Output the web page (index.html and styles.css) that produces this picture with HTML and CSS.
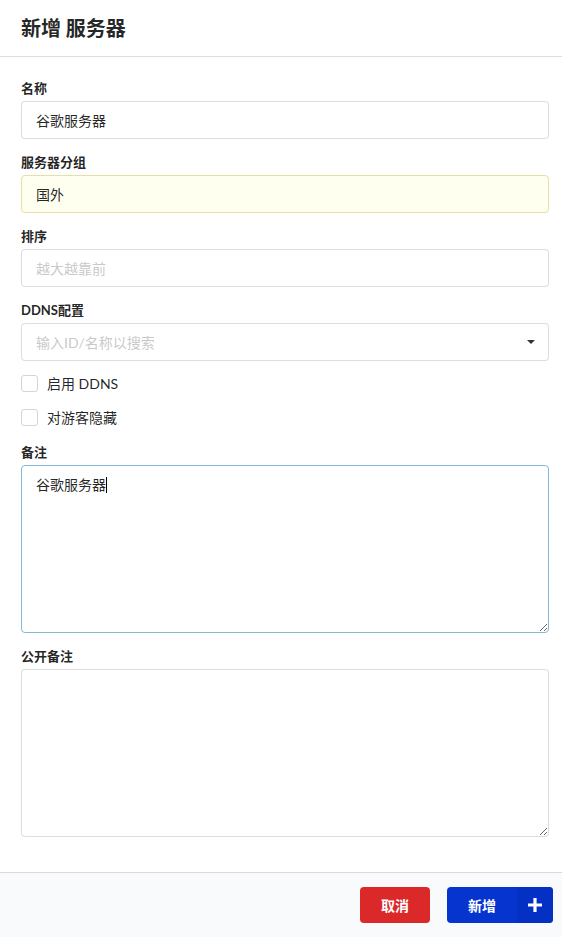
FILE: index.html
```html
<!DOCTYPE html>
<html>
	<head>
		<meta charset="UTF-8">
		<title>新增 服务器</title>
		<link rel="stylesheet" href="styles.css">
	</head>
	<body>
		<div class="modal">
			<div class="header">新增 服务器</div>
			<div class="content">
				<form class="form">
					<div class="field">
						<label>名称</label>
						<input type="text" value="谷歌服务器">
					</div>
					<div class="field">
						<label>服务器分组</label>
						<input type="text" class="filled" value="国外">
					</div>
					<div class="field">
						<label>排序</label>
						<input type="text" placeholder="越大越靠前">
					</div>
					<div class="field">
						<label>DDNS配置</label>
						<div class="dropdown">
							<span class="text">输入ID/名称以搜索</span>
							<span class="caret"></span>
						</div>
					</div>
					<div class="field check">
						<span class="box"></span>
						<span class="check-text">启用 DDNS</span>
					</div>
					<div class="field check">
						<span class="box"></span>
						<span class="check-text">对游客隐藏</span>
					</div>
					<div class="field">
						<label>备注</label>
						<div class="area-wrap">
							<textarea class="focus">谷歌服务器</textarea>
							<!-- 光标 -->
							<div class="cursor-layer"><span class="ghost">谷歌服务器</span><span class="cursor"></span></div>
						</div>
					</div>
					<div class="field">
						<label>公开备注</label>
						<textarea></textarea>
					</div>
				</form>
			</div>
			<div class="actions">
				<button class="btn red">取消</button>
				<button class="btn blue labeled">新增<span class="icon">
					<svg width="14" height="14" viewBox="0 0 14 14"><path d="M5.4 0h3.2v5.4H14v3.2H8.6V14H5.4V8.6H0V5.4h5.4z" fill="#fff"/></svg>
				</span></button>
			</div>
		</div>
	</body>
</html>
```

FILE: styles.css
```css
*{
	margin: 0px;
	padding: 0px;
	box-sizing: border-box;
}
html,body{
	background: #fff;
}
body{
	font-family: Lato, "Noto Sans CJK SC", sans-serif;
	font-size: 14px;
	line-height: 1.4285em;
	color: rgba(0,0,0,0.87);
}
.modal{
	width: 562px;
	min-height: 937px;
	display: flex;
	flex-direction: column;
}
.header{
	font-size: 20px;
	font-weight: bold;
	line-height: 25px;
	padding: 16px 21px 15px;
	border-bottom: 1px solid rgba(34,36,38,0.15);
}
.content{
	padding: 22px 13px 20px 21px;
	flex: 1;
}
.field{
	margin-bottom: 14px;
}
.field:last-child{
	margin-bottom: 0px;
}
.field label{
	display: block;
	font-size: 13px;
	font-weight: bold;
	line-height: 18px;
	margin-bottom: 4px;
}
.field input,.field textarea,.dropdown{
	display: block;
	width: 100%;
	font-family: Lato, "Noto Sans CJK SC", sans-serif;
	font-size: 14px;
	line-height: 17px;
	padding: 9.5px 14px;
	border: 1px solid rgba(34,36,38,0.15);
	border-radius: 4px;
	color: rgba(0,0,0,0.87);
	background: #fff;
	outline: none;
}
.field input::placeholder{
	color: rgba(191,191,191,0.87);
}
.field input.filled{
	background: #fffff0;
	border-color: #e5e0a3;
}
.dropdown{
	display: flex;
	align-items: center;
	justify-content: space-between;
}
.dropdown .text{
	color: rgba(191,191,191,0.87);
}
.dropdown .caret{
	width: 0px;
	height: 0px;
	border-left: 4px solid transparent;
	border-right: 4px solid transparent;
	border-top: 4px solid rgba(0,0,0,0.8);
	margin-right: -1px;
}
.field textarea{
	height: 168px;
	resize: vertical;
	line-height: 19px;
	padding: 9px 14px;
}
.field textarea.focus{
	border-color: #85b7d9;
}
.area-wrap{
	position: relative;
}
.cursor-layer{
	position: absolute;
	left: 1px;
	top: 1px;
	padding: 9px 14px;
	font-size: 14px;
	line-height: 19px;
	pointer-events: none;
	display: flex;
	align-items: center;
}
.cursor-layer .ghost{
	color: transparent;
}
.cursor-layer .cursor{
	width: 1px;
	height: 16px;
	background: #000;
}
.check{
	display: flex;
	align-items: flex-start;
	height: 20px;
}
.check .box{
	width: 17px;
	height: 17px;
	border: 1px solid #d4d4d5;
	border-radius: 3px;
	background: #fff;
}
.check-text{
	margin-left: 9px;
	font-size: 14px;
	line-height: 17px;
}
.actions{
	background: #f9fafb;
	border-top: 1px solid rgba(34,36,38,0.15);
	padding: 14px 9px 14px 14px;
	display: flex;
	justify-content: flex-end;
	gap: 17px;
}
.btn{
	height: 36px;
	border: none;
	border-radius: 4px;
	font-family: Lato, "Noto Sans CJK SC", sans-serif;
	font-size: 14px;
	font-weight: bold;
	color: #fff;
	padding: 0px 21px;
	position: relative;
}
.red{
	background: #db2828;
}
.blue{
	background: #0535ce;
}
.labeled{
	padding-right: 57px;
}
.labeled .icon{
	position: absolute;
	right: 0px;
	top: 0px;
	width: 36px;
	height: 36px;
	background: #0431c3;
	border-radius: 0px 4px 4px 0px;
	display: flex;
	align-items: center;
	justify-content: center;
}
```
